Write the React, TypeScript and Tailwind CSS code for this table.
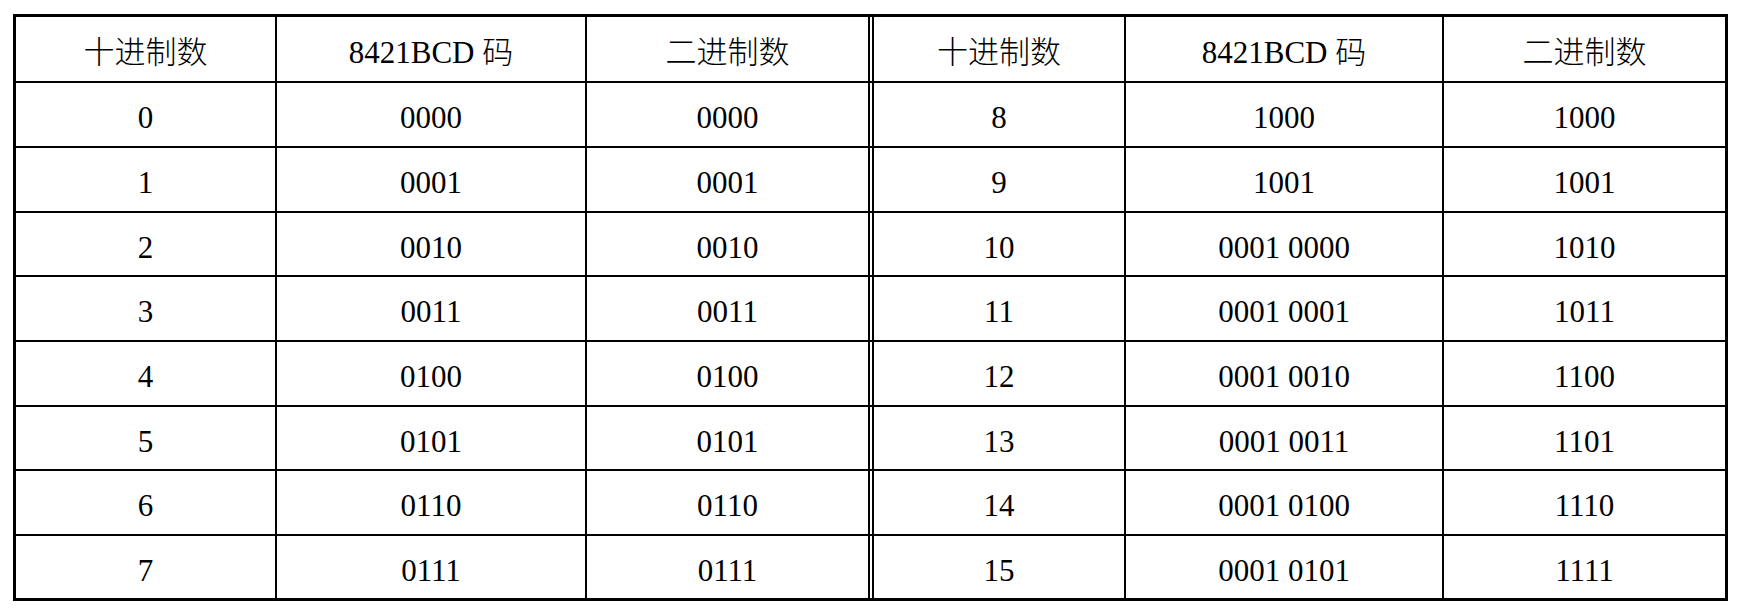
import React from "react";

const rows = [
  ["十进制数", "8421BCD 码", "二进制数", "十进制数", "8421BCD 码", "二进制数"],
  ["0", "0000", "0000", "8", "1000", "1000"],
  ["1", "0001", "0001", "9", "1001", "1001"],
  ["2", "0010", "0010", "10", "0001 0000", "1010"],
  ["3", "0011", "0011", "11", "0001 0001", "1011"],
  ["4", "0100", "0100", "12", "0001 0010", "1100"],
  ["5", "0101", "0101", "13", "0001 0011", "1101"],
  ["6", "0110", "0110", "14", "0001 0100", "1110"],
  ["7", "0111", "0111", "15", "0001 0101", "1111"],
];

// row heights include the 2px bottom rule
const rowClasses = [
  "h-[66px] border-b-2",
  "h-[65px] border-b-2",
  "h-[65px] border-b-2",
  "h-[64px] border-b-2",
  "h-[65px] border-b-2",
  "h-[65px] border-b-2",
  "h-[64px] border-b-2",
  "h-[65px] border-b-2",
  "h-[62px]",
];

const colClasses = [
  "w-[261px] border-r-2",
  "w-[310px] border-r-2",
  "w-[287px] border-r-[6px] border-double",
  "w-[252px] border-r-2",
  "w-[318px] border-r-2",
  "w-[281px]",
];

export default function App() {
  return (
    <div className="w-[1742px] h-[615px] bg-white pl-[13px] pt-[14px]">
      <div
        className="w-[1715px] h-[587px] border-[3px] border-black flex flex-col text-black text-[31px] font-light"
        style={{ fontFamily: '"Liberation Serif", "Noto Sans CJK SC", serif' }}
      >
        {rows.map((row, i) => (
          <div key={i} className={`flex border-black ${rowClasses[i]}`}>
            {row.map((cell, j) => (
              <div
                key={j}
                className={`flex items-center justify-center pt-2 border-black ${colClasses[j]}`}
              >
                {cell}
              </div>
            ))}
          </div>
        ))}
      </div>
    </div>
  );
}
